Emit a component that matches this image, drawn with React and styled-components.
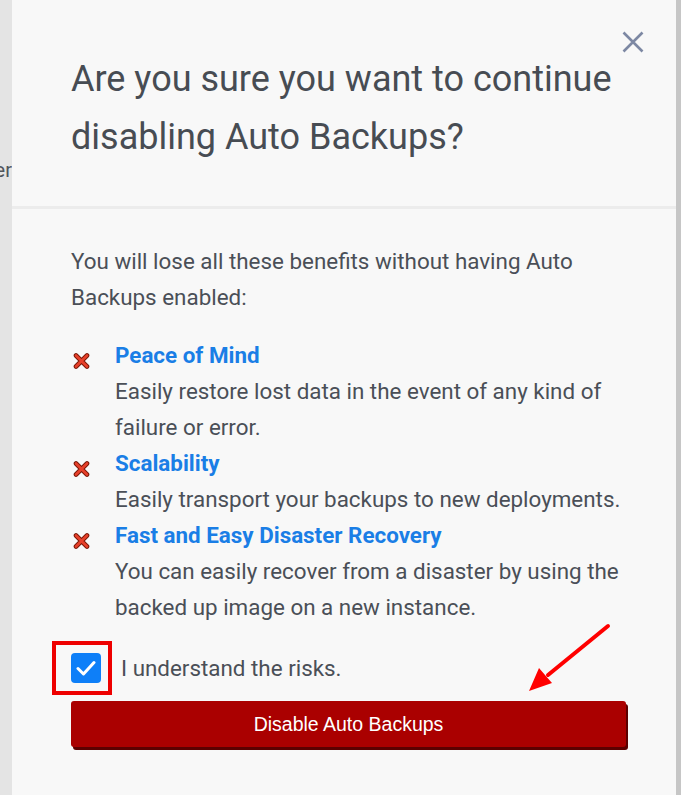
import React from "react";
import styled, { createGlobalStyle } from "styled-components";

const Global = createGlobalStyle`
  html, body { margin: 0; padding: 0; background: #f8f8f8; }
  body { font-family: Roboto, "Noto Sans", sans-serif; }
`;

const Page = styled.div`
  display: flex;
  height: 795px;
  width: 681px;
  overflow: hidden;
`;

const LeftStrip = styled.div`
  width: 12px;
  flex: none;
  background: #e4e4e4;
  display: flex;
  justify-content: flex-end;
  overflow: hidden;
  padding-top: 156px;
  box-sizing: border-box;
`;

const StripText = styled.span`
  font-size: 20px;
  line-height: 28px;
  color: #50555c;
  white-space: nowrap;
  flex: none;
`;

const RightStrip = styled.div`
  width: 5px;
  flex: none;
  background: #c6c6c6;
`;

const Panel = styled.div`
  flex: 1;
  position: relative;
  background: #f8f8f8;
`;

const Header = styled.div`
  padding: 50px 48px 40px 59px;
  border-bottom: 3px solid #ececec;
`;

const Title = styled.h2`
  margin: 0;
  font-family: Roboto, sans-serif;
  font-weight: 400;
  font-size: 36px;
  line-height: 58px;
  color: #474c53;
`;

const Close = styled.button`
  position: absolute;
  top: 30px;
  right: 31px;
  width: 24px;
  height: 24px;
  padding: 0;
  border: 0;
  background: none;
  display: flex;
  align-items: center;
  justify-content: center;
  cursor: pointer;
`;

const Body = styled.div`
  padding: 34px 50px 0 59px;
  font-size: 22.4px;
  line-height: 36px;
  color: #4a4f57;
`;

const Intro = styled.p`
  margin: 0 0 22px;
`;

const List = styled.ul`
  list-style: none;
  margin: 0;
  padding: 0;
`;

const Item = styled.li`
  display: grid;
  grid-template-columns: 44px 1fr;
`;

const IconCell = styled.div`
  padding-top: 6px;
  padding-left: 2px;
`;

const ItemTitle = styled.div`
  color: #1a7ee6;
  font-weight: 700;
`;

const CheckRow = styled.label`
  display: flex;
  align-items: center;
  gap: 20px;
  margin-top: 28px;
  height: 30px;
`;

const BoxWrap = styled.span`
  position: relative;
  width: 30px;
  height: 30px;
  flex: none;
`;

const Box = styled.span`
  display: flex;
  align-items: center;
  justify-content: center;
  width: 30px;
  height: 30px;
  border-radius: 4px;
  background: #0e7ff8;
`;

const Highlight = styled.span`
  position: absolute;
  top: -12px;
  left: -19px;
  width: 60px;
  height: 54px;
  box-sizing: border-box;
  border: 4px solid #ee0000;
`;

const Button = styled.button`
  display: block;
  width: 555px;
  height: 46px;
  margin-top: 18px;
  border: 0;
  border-radius: 3px;
  background: #aa0000;
  box-shadow: 2px 3px 0 #5c0000;
  color: #ffffff;
  font-family: "Liberation Sans", Arial, sans-serif;
  font-size: 19.5px;
  padding-top: 2px;
  cursor: pointer;
`;

const Arrow = styled.svg`
  position: absolute;
  left: 512px;
  top: 620px;
  overflow: visible;
`;

const XMark = () => (
  <svg width="17" height="16" viewBox="0 0 17 16">
    <g strokeLinecap="round">
      <path d="M3 2.5 L14 13.5 M14 2.5 L3 13.5" stroke="#7a1808" strokeWidth="4.6" />
      <path d="M3 2.5 L14 13.5 M14 2.5 L3 13.5" stroke="#e8402a" strokeWidth="2.6" />
    </g>
  </svg>
);

const items = [
  {
    title: "Peace of Mind",
    text: "Easily restore lost data in the event of any kind of failure or error.",
  },
  {
    title: "Scalability",
    text: "Easily transport your backups to new deployments.",
  },
  {
    title: "Fast and Easy Disaster Recovery",
    text: "You can easily recover from a disaster by using the backed up image on a new instance.",
  },
];

export default function App() {
  return (
    <>
      <Global />
      <Page>
        <LeftStrip>
          <StripText>er</StripText>
        </LeftStrip>
        <Panel>
          <Header>
            <Title>Are you sure you want to continue disabling Auto Backups?</Title>
          </Header>
          <Close aria-label="Close">
            <svg width="22" height="22" viewBox="0 0 22 22">
              <path d="M1.5 1.5 L20.5 20.5 M20.5 1.5 L1.5 20.5" stroke="#7d88a3" strokeWidth="2.6" />
            </svg>
          </Close>
          <Body>
            <Intro>You will lose all these benefits without having Auto Backups enabled:</Intro>
            <List>
              {items.map((it) => (
                <Item key={it.title}>
                  <IconCell>
                    <XMark />
                  </IconCell>
                  <div>
                    <ItemTitle>{it.title}</ItemTitle>
                    <div>{it.text}</div>
                  </div>
                </Item>
              ))}
            </List>
            <CheckRow>
              <BoxWrap>
                <Box>
                  <svg width="20" height="16" viewBox="0 0 20 16">
                    <path d="M2 8.5 L7.5 14 L18 2.5" fill="none" stroke="#fff" strokeWidth="3" strokeLinecap="round" strokeLinejoin="round" />
                  </svg>
                </Box>
                <Highlight />
              </BoxWrap>
              <span>I understand the risks.</span>
            </CheckRow>
            <Button>Disable Auto Backups</Button>
          </Body>
          <Arrow width="100" height="80" viewBox="0 0 100 80">
            <path d="M84 6 L24 55" stroke="#ff0000" strokeWidth="4" strokeLinecap="round" />
            <path d="M5 71 L15 48 L21 55 L28 63 Z" fill="#ff0000" />
          </Arrow>
        </Panel>
        <RightStrip />
      </Page>
    </>
  );
}
